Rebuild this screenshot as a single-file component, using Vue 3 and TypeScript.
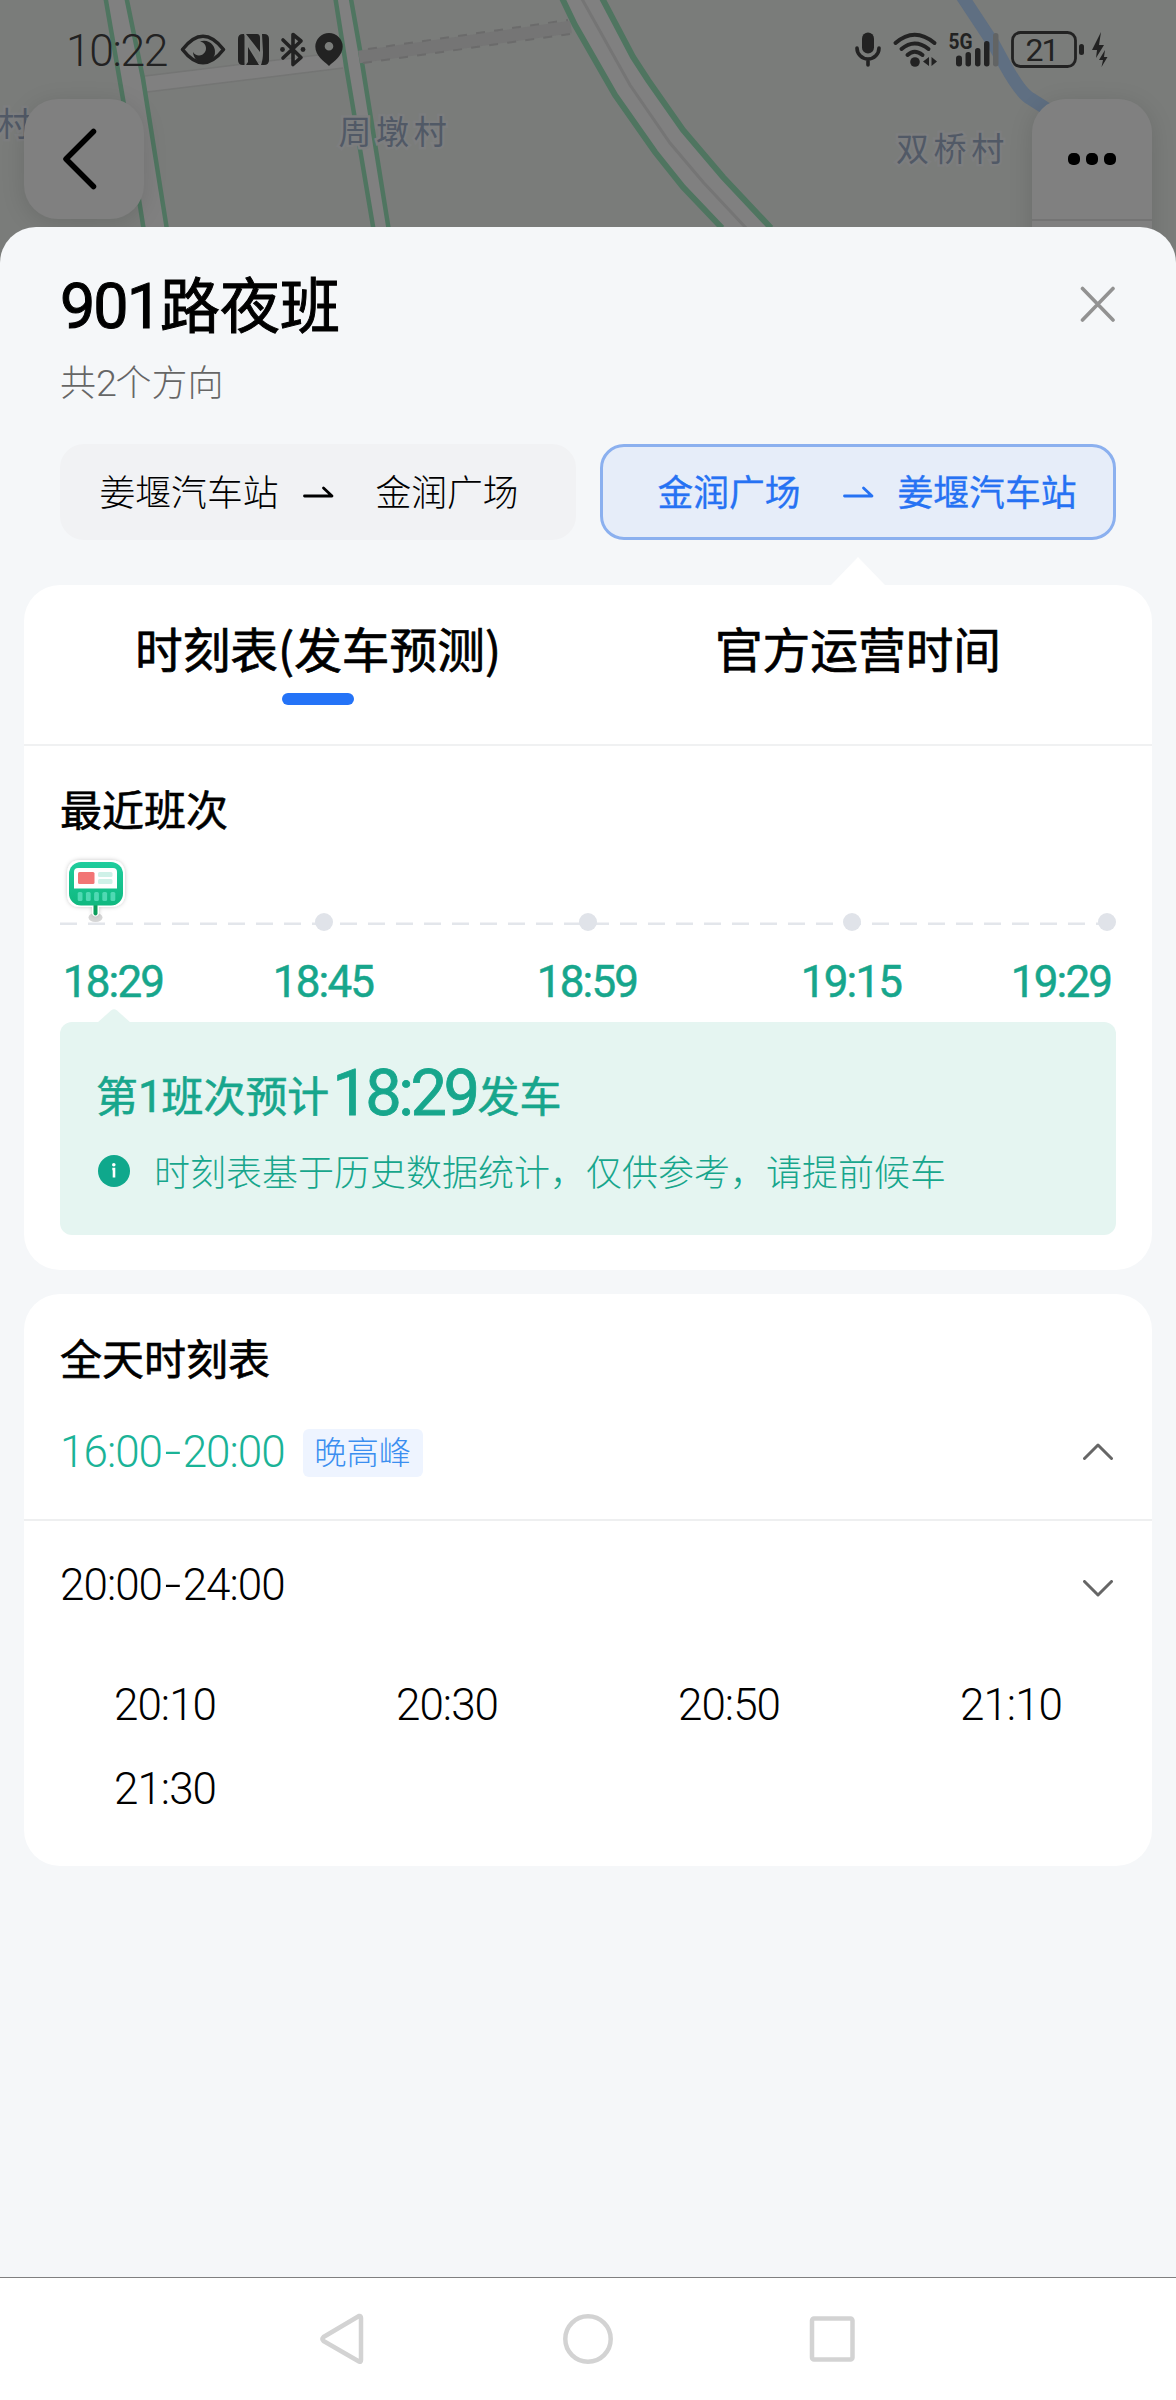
<script setup lang="ts">
import { ref } from 'vue'

interface Direction {
  from: string
  to: string
}

const directions: Direction[] = [
  { from: '姜堰汽车站', to: '金润广场' },
  { from: '金润广场', to: '姜堰汽车站' },
]
const activeDirection = ref(1)

const tabs: string[] = ['时刻表(发车预测)', '官方运营时间']
const activeTab = ref(0)

const upcoming: string[] = ['18:29', '18:45', '18:59', '19:15', '19:29']
const lateTimes: string[] = ['20:10', '20:30', '20:50', '21:10', '21:30']
</script>

<template>
  <div class="screen">
    <svg class="map" width="1176" height="270" viewBox="0 0 1176 270">
      <rect width="1176" height="270" fill="#7a7c7a" />
      <path d="M145 76 L343 52 V68 L147 92Z" fill="#808080" />
      <path d="M145 76 L343 52 M147 92 L343 68" stroke="#747574" stroke-width="1.5" />
      <path d="M106 0 L127 0 L167 227 L143 227Z M336 0 L351 0 L388 227 L373 227Z" fill="#808080" />
      <g fill="none" stroke="#4f7560" stroke-width="4.5">
        <path d="M105.7 -1 L123.5 102 L143.5 228" />
        <path d="M126.7 -1 L142.7 77 L166.7 228" />
        <path d="M335.5 -1 L346.7 70 L373.3 228" />
        <path d="M351 -1 L360 50 L388.5 228" />
      </g>
      <path d="M359 57 L571 27" stroke="#757575" stroke-width="12.5" />
      <path d="M368 49 L568 20 M363 63 L570 34" stroke="#6b6b6b" stroke-width="2" stroke-dasharray="9 9.2" />
      <path
        d="M562 -1 L575 25 L615 95 L655 152 L683 187 L722 228 H770 L723 177 L683 130 L648 80 L633 57 L602 -1Z"
        fill="#808080"
      />
      <path d="M582 -1 L630 85 L670 143 L703 182 L746 228" fill="none" stroke="#757575" stroke-width="3" />
      <g fill="none" stroke="#4f7560" stroke-width="6">
        <path d="M562 -2 L575 25 L615 95 L655 152 L683 187 L722 228" />
        <path d="M602 -2 L633 57 L648 80 L683 130 L723 177 L771 228" />
      </g>
      <path d="M962 -4 L993 43 L1005 65 Q1021 94 1031 99 L1050 111" fill="none" stroke="#5f6f82" stroke-width="13" />
      <g class="place">
        <text x="-2" y="136">村</text>
        <text x="338.500" y="143.500">周墩村</text>
        <text x="896" y="161">双桥村</text>
      </g>
    </svg>

    <header class="top">
      <div class="status">
        <div class="status-left">
          <span class="clock">10:22</span>
          <svg width="166" height="40" viewBox="180 30 166 40" fill="#222">
            <path d="M182.500 49.500 Q203 23 223.500 49.500 Q203 76 182.500 49.500Z" fill="none" stroke="#222" stroke-width="3.600" stroke-linejoin="round" />
            <path d="M200 41.500 A11 11 0 1 1 193 52 A7 7 0 1 0 200 41.500Z" />
            <path d="M244 34 H243 Q238 34 238 39 V60 Q238 65 243 65 H244.500 V36Z" />
            <path d="M246 34 L260 52 V38 Q260 34 257 34Z M246 65 H259 L248 47 V62Z" />
            <path d="M249 41 L259 54 V60 L249 46Z" fill="#777977" />
            <path d="M262 34 H264 Q269 34 269 39 V60 Q269 65 264 65 H261 Q263 60 263 52Z" />
            <g fill="none" stroke="#222" stroke-width="3.600" stroke-linejoin="round" stroke-linecap="round">
              <path d="M283 40 L301 57.500 L293 64.500 V34.500 L301 41 L283 58" />
            </g>
            <circle cx="282.500" cy="49.500" r="2.400" />
            <circle cx="303" cy="49.500" r="2.400" />
            <path fill-rule="evenodd" d="M329 33 A13.700 13.700 0 0 1 342.700 46.500 C342.700 56 334 61 329 66 C324 61 315.300 56 315.300 46.500 A13.700 13.700 0 0 1 329 33Z M329 42 A4.300 4.300 0 1 0 329 50.600 A4.300 4.300 0 1 0 329 42Z" />
          </svg>
        </div>
        <svg class="status-right" width="260" height="40" viewBox="852 30 260 40" fill="#222">
          <rect x="862" y="32.500" width="12" height="21" rx="6" />
          <path d="M857 48 A11 11 0 0 0 879 48 M868 59 V65" fill="none" stroke="#222" stroke-width="3.600" stroke-linecap="round" />
          <g fill="none" stroke="#222" stroke-width="4" stroke-linecap="round">
            <path d="M895.500 43 Q914.500 26.500 934.500 43" />
            <path d="M901.500 49 Q914.500 38 928.500 49" />
            <path d="M907.500 55 Q914.500 48.500 922.500 55" />
          </g>
          <circle cx="915" cy="62" r="4.800" />
          <path d="M929 57 V66 L923 61.500Z M931.500 57 V66 L937 61.500Z" />
          <text x="948.500" y="49" class="net" textLength="24" lengthAdjust="spacingAndGlyphs">5G</text>
          <rect x="956" y="55.500" width="6" height="11" rx="3" />
          <rect x="965.500" y="52" width="5.500" height="14.500" rx="2.700" />
          <rect x="975" y="48" width="5.500" height="18.500" rx="2.700" />
          <rect x="984" y="41" width="5.500" height="25.500" rx="2.700" />
          <rect x="993" y="33" width="5.500" height="33.500" rx="2.700" fill="#626464" />
          <rect x="1012.500" y="32.500" width="63" height="34" rx="8" fill="none" stroke="#222" stroke-width="2.800" />
          <text x="1025.500" y="61" class="battery" textLength="34">21</text>
          <rect x="1079" y="44" width="5" height="11" rx="2.500" />
          <path d="M1101 32 L1092 50 H1097 L1096 58 L1104 45 H1099Z M1105 50 L1099 60 H1103 L1101.500 67 L1107.500 57 H1104Z" />
        </svg>
      </div>
      <div class="nav">
        <button class="round-btn">
          <svg width="120" height="120" viewBox="0 0 120 120">
            <path d="M69.500 32.500 L42 60 L69.500 87.500" fill="none" stroke="#000" stroke-width="5.500" stroke-linecap="round" stroke-linejoin="round" />
          </svg>
        </button>
        <button class="round-btn more">
          <i class="dot3"></i><i class="dot3"></i><i class="dot3"></i>
        </button>
      </div>
    </header>

    <main class="sheet">
      <div class="title-row">
        <h1><span class="num">901</span>路夜班</h1>
        <svg width="36" height="36" viewBox="0 0 36 36">
          <path d="M2.500 2.500 L33 34 M33 2.500 L2.500 34" stroke="#929292" stroke-width="3.600" stroke-linecap="round" />
        </svg>
      </div>
      <p class="sub">共<span class="num">2</span>个方向</p>

      <div class="directions">
        <div v-for="(d, i) in directions" :key="i" class="direction" :class="{ active: i === activeDirection }" @click="activeDirection = i">
          <span>{{ d.from }}</span>
          <svg width="40" height="16" viewBox="0 0 40 16">
            <path d="M6.500 12 H34 L25.500 4" fill="none" stroke="currentColor" stroke-width="2.800" stroke-linecap="round" stroke-linejoin="round" />
          </svg>
          <span>{{ d.to }}</span>
        </div>
      </div>

      <section class="card first">
        <i class="pointer"></i>
        <div class="tabs">
          <div v-for="(t, i) in tabs" :key="t" class="tab" :class="{ on: i === activeTab }" @click="activeTab = i">{{ t }}</div>
        </div>
        <div class="recent">
          <h2>最近班次</h2>
          <svg class="timeline" width="1056" height="80" viewBox="60 852 1056 80">
            <defs>
              <linearGradient id="busGreen" x1="0" y1="0" x2="0" y2="1">
                <stop offset="0" stop-color="#1fcd9d" />
                <stop offset="1" stop-color="#0fb87f" />
              </linearGradient>
              <filter id="soft" x="-30%" y="-30%" width="160%" height="160%">
                <feDropShadow dx="0" dy="0" stdDeviation="2" flood-color="#000" flood-opacity=".22" />
              </filter>
            </defs>
            <path d="M60 923.700 H1116" stroke="#e3e6eb" stroke-width="2.600" stroke-dasharray="17 11" />
            <circle v-for="x in [324, 588, 852, 1107]" :key="x" :cx="x" cy="922" r="9" fill="#e0e3e9" />
            <ellipse cx="95.500" cy="917.500" rx="7" ry="4.500" fill="#d6d6d6" />
            <path filter="url(#soft)" d="M81 860 H110 Q125 860 125 875 V893 Q125 907 110 907 H99 V914 Q95.500 919 92 914 V907 H81 Q67 907 67 893 V875 Q67 860 81 860Z" fill="#fff" />
            <path d="M93.500 904 H97.500 V914 Q95.500 917 93.500 914Z" fill="#0b9d5c" />
            <rect x="69" y="862" width="54" height="43.500" rx="12" fill="url(#busGreen)" />
            <path d="M78 868 H113 Q117 868 117 872 V888.500 H74 V872 Q74 868 78 868Z" fill="#fff" />
            <rect x="78" y="872" width="16.500" height="12" rx="1.500" fill="#f27575" />
            <rect x="98" y="872" width="14.500" height="5" rx="1.500" fill="#cff1e8" />
            <rect x="98" y="879" width="14.500" height="5" rx="1.500" fill="#cff1e8" />
            <rect v-for="n in 5" :key="n" :x="69.500 + n * 8.200" y="892" width="4.800" height="9" rx="1.500" fill="#4fd9b3" />
          </svg>
          <div class="upcoming num">
            <span v-for="t in upcoming" :key="t">{{ t }}</span>
          </div>
          <div class="forecast">
            <svg class="notch" width="34" height="14" viewBox="0 0 34 14">
              <path d="M0 14 L14 1.500 Q17 -1 20 1.500 L34 14Z" fill="#e5f5f1" />
            </svg>
            <p class="headline">第<span class="num">1</span>班次预计<span class="num big">18:29</span>发车</p>
            <p class="note">
              <svg width="32" height="32" viewBox="0 0 32 32">
                <circle cx="16" cy="16" r="16" fill="#0fa88c" />
                <circle cx="15.800" cy="9.800" r="1.800" fill="#fff" />
                <path d="M14.300 14 H16 V22.500" fill="none" stroke="#fff" stroke-width="2.600" />
              </svg>
              <span>时刻表基于历史数据统计，仅供参考，请提前候车</span>
            </p>
          </div>
        </div>
      </section>

      <section class="card second">
        <h2>全天时刻表</h2>
        <div class="range green">
          <span class="num">16:00<i class="dash">-</i>20:00</span>
          <em>晚高峰</em>
          <svg width="30" height="17" viewBox="0 0 30 17">
            <path d="M1.500 15.500 L15 2 L28.500 15.500" fill="none" stroke="#666" stroke-width="3" stroke-linecap="round" stroke-linejoin="round" />
          </svg>
        </div>
        <div class="range late">
          <span class="num">20:00<i class="dash">-</i>24:00</span>
          <svg width="30" height="17" viewBox="0 0 30 17">
            <path d="M1.500 1.500 L15 15 L28.500 1.500" fill="none" stroke="#666" stroke-width="3" stroke-linecap="round" stroke-linejoin="round" />
          </svg>
        </div>
        <div class="grid num">
          <span v-for="t in lateTimes" :key="t">{{ t }}</span>
        </div>
      </section>
    </main>

    <footer class="softkeys">
      <svg width="536" height="56" viewBox="320 2311 536 56" fill="none" stroke="#d3d3d3" stroke-width="4.500" stroke-linejoin="round">
        <path d="M359 2316 Q361 2315.500 361 2318 V2360 Q361 2362.500 359 2361.500 L323.500 2341 Q321.500 2339 323.500 2337Z" />
        <circle cx="588" cy="2339" r="22.700" />
        <rect x="812" y="2318.500" width="40.500" height="41" rx="2" />
      </svg>
    </footer>
  </div>
</template>

<style>
body {
  margin: 0;
}
</style>

<style scoped>
.screen {
  position: relative;
  display: flex;
  flex-direction: column;
  width: 1176px;
  height: 2400px;
  overflow: hidden;
  background: #7a7c7a;
  color: #000;
  font-family: 'Noto Sans CJK SC', sans-serif;
}
h1,
h2,
p {
  margin: 0;
  font-weight: 400;
}
svg {
  display: block;
  flex: none;
}
.num {
  font-family: Roboto, sans-serif;
  font-size: 1.048em;
  letter-spacing: -0.022em;
}
.map {
  position: absolute;
  left: 0;
  top: 0;
}
.place {
  font-size: 33px;
  font-weight: 400;
  letter-spacing: 4.6px;
  fill: #515966;
  stroke: #7d7e7f;
  stroke-width: 5px;
  paint-order: stroke;
}
.top {
  position: relative;
  height: 227px;
  flex: none;
}
.status {
  display: flex;
  justify-content: space-between;
  padding: 30px 64px 0 66px;
  height: 99px;
  box-sizing: border-box;
}
.status-left {
  display: flex;
}
.status-right {
  overflow: visible;
}
.clock {
  width: 114px;
  font: 300 44.500px/42px Roboto, sans-serif;
  letter-spacing: -1.400px;
  color: #222;
}
.net {
  font: 700 22px Roboto, sans-serif;
}
.battery {
  font: 400 32px Roboto, sans-serif;
}
.nav {
  display: flex;
  justify-content: space-between;
  padding: 0 24px;
}
.round-btn {
  width: 120px;
  height: 120px;
  padding: 0;
  border: 0;
  border-radius: 34px;
  background: #808080;
  box-shadow: 0 4px 24px rgba(0, 0, 0, 0.12);
}
.more {
  display: flex;
  height: 180px;
  gap: 6px;
  padding-top: 54px;
  justify-content: center;
  background: linear-gradient(#808080 120px, #747474 120px, #747474 122px, #808080 122px);
}
.dot3 {
  width: 12px;
  height: 12px;
  border-radius: 5px;
  background: #000;
}
.sheet {
  position: relative;
  flex: 1;
  padding-top: 37px;
  border-radius: 36px 36px 0 0;
  background: #f5f7f9;
}
.title-row {
  display: flex;
  align-items: center;
  justify-content: space-between;
  height: 80px;
  padding: 0 60px;
}
h1 {
  font-size: 60px;
  line-height: 80px;
  -webkit-text-stroke: 1px currentColor;
}
h1 .num {
  letter-spacing: -0.032em;
}
.sub {
  margin-top: 14px;
  padding-left: 60px;
  font-size: 36px;
  line-height: 44px;
  font-weight: 300;
  color: #666;
}
.sub .num {
  letter-spacing: -0.04em;
}
.directions {
  display: flex;
  gap: 24px;
  margin-top: 39px;
  padding: 0 60px;
}
.direction {
  display: flex;
  align-items: center;
  flex: 1;
  height: 96px;
  box-sizing: border-box;
  padding: 0 17px;
  border: 3px solid #f1f2f4;
  border-radius: 24px;
  background: #f1f2f4;
  font-size: 35.800px;
  font-weight: 300;
}
.direction span {
  flex: 1;
  padding-bottom: 4px;
  text-align: center;
  white-space: nowrap;
  line-height: 48px;
}
.direction.active {
  border-color: #8bb0ef;
  background: #e6edf9;
  color: #2672f3;
  font-weight: 400;
  -webkit-text-stroke: 0.3px currentColor;
}
.card {
  position: relative;
  margin: 0 24px;
  border-radius: 36px;
  background: #fff;
}
.first {
  margin-top: 45px;
  height: 685px;
}
.pointer {
  position: absolute;
  left: 807px;
  top: -28px;
  border: solid transparent;
  border-width: 0 27px 28px;
  border-bottom-color: #fff;
}
.tabs {
  display: flex;
  gap: 24px;
  height: 159px;
  padding: 0 36px;
  border-bottom: 2px solid #f0f1f2;
}
.tab {
  display: flex;
  flex-direction: column;
  align-items: center;
  flex: 1;
  padding-top: 31px;
  font-size: 47.700px;
  font-weight: 400;
  line-height: 64px;
  -webkit-text-stroke: 0.7px currentColor;
}
.on::after {
  content: '';
  width: 72px;
  height: 12px;
  margin-top: 13px;
  border-radius: 6px;
  background: #2473f7;
}
.recent {
  padding: 36px 36px 0;
}
h2 {
  font-size: 42px;
  line-height: 52px;
  -webkit-text-stroke: 0.6px currentColor;
}
.timeline {
  margin-top: 18px;
}
.upcoming {
  display: grid;
  grid-template-columns: 106px 314px 214px 314px 106px;
  margin-top: 30px;
  font-size: 44px;
  line-height: 40px;
  font-weight: 400;
  letter-spacing: -0.042em;
  text-align: center;
  color: #17a68c;
  -webkit-text-stroke: 0.5px currentColor;
}
.forecast {
  position: relative;
  height: 213px;
  margin-top: 20px;
  border-radius: 12px;
  background: #e5f5f1;
  color: #17a68c;
  box-sizing: border-box;
  padding: 37px 36px 0;
}
.notch {
  position: absolute;
  left: 37px;
  top: -13px;
}
.headline {
  height: 70px;
  font-size: 41.900px;
  line-height: 70px;
  white-space: nowrap;
  -webkit-text-stroke: 0.6px currentColor;
}
.headline .big {
  margin: 0 1px 0 3px;
  font-size: 65px;
  line-height: 1;
  letter-spacing: -0.054em;
  vertical-align: -3px;
  -webkit-text-stroke: 0.8px currentColor;
}
.note {
  display: flex;
  align-items: center;
  gap: 10px;
  margin-top: 17px;
  padding-left: 2px;
  font-size: 36px;
  line-height: 48px;
  font-weight: 300;
}
.note span {
  margin-left: 14px;
  padding-bottom: 2px;
}
.second {
  margin-top: 24px;
  height: 572px;
}
.second h2 {
  padding: 37px 36px 1px;
}
.range {
  display: flex;
  align-items: center;
  padding: 0 39px 0 36px;
  font-size: 42px;
  font-weight: 300;
}
.range svg {
  margin-left: auto;
}
.green {
  height: 135px;
  border-bottom: 2px solid #eeeff0;
  color: #1ab397;
  align-items: flex-start;
}
.green .num {
  margin-top: 43px;
  line-height: 50px;
}
.green em {
  margin: 45px 0 0 18px;
  width: 120px;
  height: 48px;
  border-radius: 6px;
  background: #eef4ff;
  color: #3a8ef0;
  font-size: 32.300px;
  font-style: normal;
  line-height: 43px;
  text-align: center;
}
.green svg {
  margin-top: 59px;
}
.late {
  height: 128px;
}
.late svg {
  margin-top: 6px;
}
.dash {
  display: inline-block;
  width: 20.600px;
  font-style: normal;
  text-align: center;
  transform: scaleX(1.35);
}
.grid {
  display: grid;
  grid-template-columns: repeat(4, 1fr);
  margin-top: 14px;
  font-size: 44px;
  line-height: 84px;
  font-weight: 300;
  text-align: center;
}
.softkeys {
  position: relative;
  flex: none;
  height: 123px;
  box-sizing: border-box;
  padding-top: 33px;
  border-top: 1px solid #808080;
  background: #fff;
}
.softkeys svg {
  margin: 0 auto;
}
</style>
